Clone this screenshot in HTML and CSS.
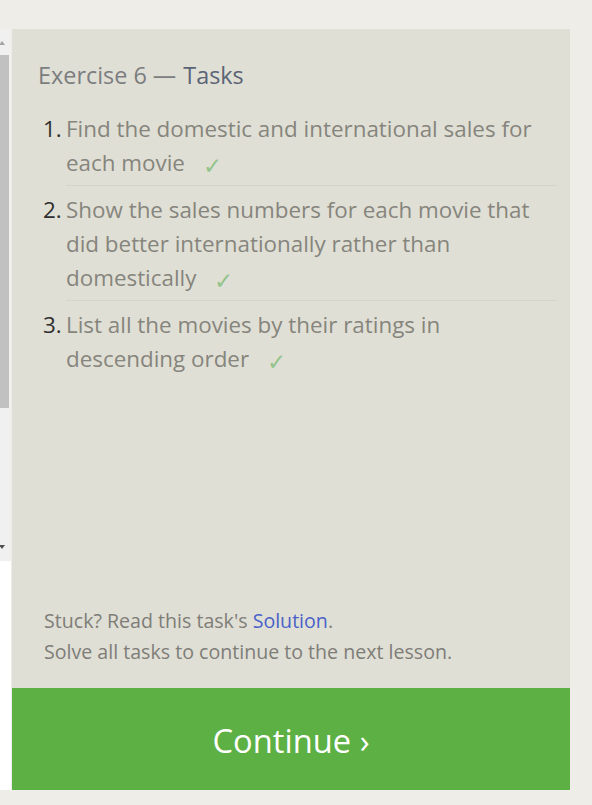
FILE: index.html
```html
<!DOCTYPE html>
<html>
<head>
<meta charset="utf-8">
<link rel="stylesheet" href="styles.css">
</head>
<body>
<div class="page">
  <div class="side">
    <div class="scroll">
      <span class="arrow up"></span>
      <div class="thumb"></div>
      <span class="arrow down"></span>
    </div>
    <div class="white"></div>
  </div>
  <div class="panel">
    <div class="content">
      <h2 class="title">Exercise 6 — <span class="strong">Tasks</span></h2>
      <ol class="tasks">
        <li><span class="num">1.</span><div class="text">Find the domestic and international sales for each movie<span class="check">✓</span></div></li>
        <li><span class="num">2.</span><div class="text">Show the sales numbers for each movie that did better internationally rather than domestically<span class="check">✓</span></div></li>
        <li><span class="num">3.</span><div class="text last">List all the movies by their ratings in descending order<span class="check">✓</span></div></li>
      </ol>
      <div class="spacer"></div>
      <p class="help">Stuck? Read this task's <a class="link">Solution</a>.<br>Solve all tasks to continue to the next lesson.</p>
    </div>
    <div class="continue">Continue ›</div>
  </div>
</div>
</body>
</html>
```
FILE: styles.css
```css
html, body {
  margin: 0;
  padding: 0;
  background: #efede8;
  font-family: "Open Sans", "Noto Sans", sans-serif;
}
.page {
  display: flex;
  gap: 1px;
  padding-top: 29px;
  height: 761px;
  width: 570px;
}
.side {
  width: 11px;
  display: flex;
  flex-direction: column;
}
.scroll {
  height: 532px;
  background: #f0f0f0;
  position: relative;
}
.thumb {
  position: absolute;
  left: 0;
  top: 26px;
  width: 9px;
  height: 353px;
  background: #c1c1c1;
}
.arrow {
  position: absolute;
  left: 0;
  width: 0;
  height: 0;
  border-left: 3px solid transparent;
  border-right: 3px solid transparent;
}
.arrow.up { top: 12px; border-bottom: 4px solid #a3a3a3; left: -1px; }
.arrow.down { bottom: 12px; border-top: 4px solid #505050; left: -1px; }
.white {
  flex: 1;
  background: #ffffff;
}
.panel {
  flex: 1;
  background: #e0dfd5;
  display: flex;
  flex-direction: column;
}
.content {
  flex: 1;
  display: flex;
  flex-direction: column;
  padding: 0 13px 0 26px;
}
.title {
  margin: 30px 0 0 0;
  font-weight: normal;
  font-size: 23.4px;
  line-height: 32px;
  color: #7b7d80;
  height: 32px;
  display: flex;
  align-items: center;
}
.title .strong { color: #5b6475; margin-left: 7px; }
.tasks {
  list-style: none;
  margin: 21px 0 0 0;
  padding: 0;
}
.tasks li {
  display: flex;
  font-size: 22.4px;
  line-height: 34px;
}
.num {
  width: 23px;
  margin-left: 5px;
  color: #2f2f2f;
}
.text {
  flex: 1;
  color: #86857d;
  padding-bottom: 5px;
  margin-bottom: 7px;
  border-bottom: 1px solid #d5d4ca;
}
.text.last { border-bottom: none; }
.check {
  display: inline-block;
  color: #93c48b;
  font-size: 23px;
  line-height: 24px;
  height: 24px;
  margin-left: 18px;
  vertical-align: -3px;
}
.spacer { flex: 1; }
.help {
  margin: 0 0 21px 6px;
  font-size: 19.6px;
  line-height: 31px;
  color: #7e7d78;
}
.link { color: #4a62c9; }
.continue {
  height: 102px;
  background: #5db044;
  color: #ffffff;
  font-size: 32.7px;
  display: flex;
  align-items: center;
  justify-content: center;
  padding-top: 2px;
  box-sizing: border-box;
}
```
